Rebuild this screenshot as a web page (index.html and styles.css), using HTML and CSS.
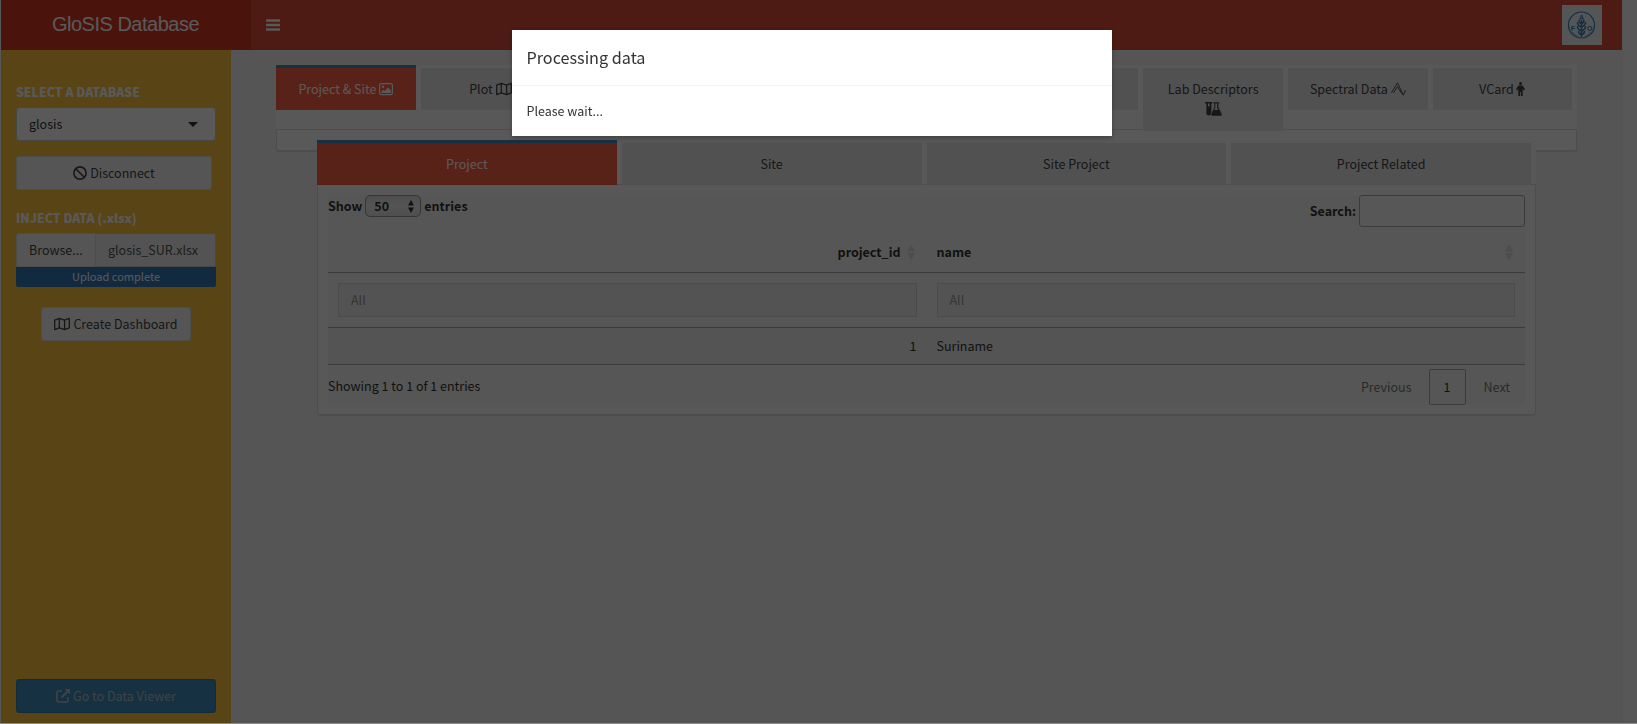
FILE: index.html
```html
<!DOCTYPE html>
<html lang="en">
<head>
<meta charset="utf-8">
<title>GloSIS Database</title>
<link rel="stylesheet" href="styles.css">
</head>
<body>
<div class="window">
  <div class="app">
    <header class="header">
      <div class="brand">GloSIS Database</div>
      <nav class="navbar">
        <svg class="bars" viewBox="0 0 14 12"><path d="M.5 1.500h13M.5 6h13M.5 10.500h13" stroke="currentColor" stroke-width="2.400" stroke-linecap="round"/></svg>
        <div class="fao">
          <svg viewBox="0 0 40 40">
            <g fill="none" stroke="#3f7fb8">
              <circle cx="19.5" cy="20" r="13" stroke-width="1.2"/>
              <path d="M19.5 15v17M19.5 19c-2-1-2.500-2-2.500-4M19.5 19c2-1 2.500-2 2.500-4M19.5 22c-3-1-4-3-4-5M19.5 22c3-1 4-3 4-5M19.5 26c-3-1-4-3-4-5M19.5 26c3-1 4-3 4-5M19.5 30c-2-1-3-3-3-4M19.5 30c2-1 3-3 3-4" stroke-width="1.500"/>
            </g>
            <g fill="#3f7fb8" class="fao-text">
              <text x="17" y="14.500">A</text><text x="8.800" y="25.500">F</text><text x="25" y="25.500">O</text>
            </g>
            <path d="M10.500 27.500q2.500 3.500 6 4.500M28.500 27.500q-2.500 3.500-6 4.500" fill="none" stroke="#86accf" stroke-width="2" stroke-dasharray="1.200 .8"/>
          </svg>
        </div>
      </nav>
    </header>
    <div class="main">
      <aside class="sidebar">
        <div class="label">SELECT A DATABASE</div>
        <div class="select"><span>glosis</span><i class="caret"></i></div>
        <button class="btn disconnect"><svg class="icon" viewBox="0 0 14 14"><g fill="none" stroke="currentColor" stroke-width="1.600"><circle cx="7" cy="7" r="6.100"/><path d="M2.700 2.700l8.600 8.600"/></g></svg>Disconnect</button>
        <div class="label inject">INJECT DATA (.xlsx)</div>
        <div class="file"><div class="browse">Browse...</div><div class="filename">glosis_SUR.xlsx</div></div>
        <div class="progress">Upload complete</div>
        <button class="btn create"><svg class="icon map" viewBox="0 0 16 14"><path d="M.7 3.200L5.300 1.300l5.300 1.900 4.700-1.900v9.500l-4.700 1.900-5.300-1.900L.7 12.700zM5.300 1.300v9.500M10.600 3.200v9.500" fill="none" stroke="currentColor" stroke-width="1.300" stroke-linejoin="round"/></svg>Create Dashboard</button>
        <button class="btn viewer"><svg class="icon" viewBox="0 0 14 14"><path d="M6 2H2.500Q.9 2 .9 3.600v7.800Q.9 13 2.500 13h7.800q1.600 0 1.600-1.600V8" fill="none" stroke="currentColor" stroke-width="1.600"/><path d="M5.500 8.500L12 2" stroke="currentColor" stroke-width="2"/><path d="M8.500 0H14v5.500z" fill="currentColor"/></svg>Go to Data Viewer</button>
      </aside>
      <section class="content">
        <div class="tabs">
          <div class="tab active">Project &amp; Site <svg class="icon" viewBox="0 0 14 14"><rect x=".6" y="1.600" width="12.800" height="11" rx="1.500" fill="none" stroke="currentColor" stroke-width="1.200"/><circle cx="4" cy="4.800" r="1.200" fill="currentColor"/><path d="M2.300 11V9.800l2-2 1.300 1.300L9 5.500l3 3.300V11z" fill="currentColor"/></svg></div>
          <div class="tab">Plot <svg class="icon map" viewBox="0 0 16 14"><path d="M.7 3.200L5.300 1.300l5.300 1.900 4.700-1.900v9.500l-4.700 1.900-5.300-1.900L.7 12.700zM5.300 1.300v9.500M10.600 3.200v9.500" fill="none" stroke="currentColor" stroke-width="1.300" stroke-linejoin="round"/></svg></div>
          <div class="tab"></div>
          <div class="tab"></div>
          <div class="tab"></div>
          <div class="tab"></div>
          <div class="tab tall">Lab Descriptors <svg class="icon flask" viewBox="0 0 17 14"><path d="M0 0h7v1.500h-.6V11a2.500 2.500 0 0 1-5 0V1.500H0z" fill="currentColor"/><path d="M3 1.600h1.500v3H3z" fill="#e8e8e8"/><path d="M7.500 0h7v1.600h-.8v4l3.200 6.200q.5 2.200-1.200 2.200H7.300q-1.700 0-1.200-2.200l2.900-6.200v-4H7.500z" fill="currentColor" stroke="#e8e8e8" stroke-width=".5"/><path d="M10.300 1.600h1.800v4.500l1.100 2H9.200l1.100-2z" fill="#e8e8e8"/></svg></div>
          <div class="tab">Spectral Data <svg class="icon wave" viewBox="0 0 15 14"><path d="M.5 10.800L6.500 .8l5.800 12.400L14.500 8M2.500 10.800l4-6.300 3.500 6 2 2.200" fill="none" stroke="currentColor" stroke-width=".9"/></svg></div>
          <div class="tab">VCard <svg class="icon person" viewBox="0 0 9 14"><circle cx="4.500" cy="1.500" r="1.500" fill="currentColor"/><path d="M3 3.500h3q.8 0 1.200.8L9 7.600l-1.300.9-1-1.500v7H4.900v-4h-.8v4H2.300V7l-1 1.500L0 7.600l1.800-3.300q.4-.8 1.200-.8z" fill="currentColor"/></svg></div>
        </div>
        <div class="pane">
          <div class="inner">
            <div class="tabs subtabs">
              <div class="tab active">Project</div><div class="tab">Site</div><div class="tab">Site Project</div><div class="tab">Project Related</div>
            </div>
            <div class="panel">
              <div class="grid">
                <div class="tools">
                  <div class="length">Show <span class="count">50<svg viewBox="0 0 6 13"><path d="M0 5.500L3 0l3 5.500zM0 7.500L3 13l3-5.500z" fill="currentColor"/></svg></span> entries</div>
                  <div class="search">Search:<input class="query" aria-label="Search"></div>
                </div>
                <div class="row head">
                  <div class="cell right">project_id<svg class="sort" viewBox="0 0 8 16"><path d="M0 7.500L4 0l4 7.500zM0 9L4 16.500 8 9z" fill="#dcdcdc"/></svg></div>
                  <div class="cell between">name<svg class="sort" viewBox="0 0 8 16"><path d="M0 7.500L4 0l4 7.500zM0 9L4 16.500 8 9z" fill="#dcdcdc"/></svg></div>
                </div>
                <div class="row filters">
                  <div class="cell"><div class="filter">All</div></div>
                  <div class="cell"><div class="filter">All</div></div>
                </div>
                <div class="row data"><div class="cell right">1</div><div class="cell">Suriname</div></div>
                <div class="foot">
                  <span class="info">Showing 1 to 1 of 1 entries</span>
                  <div class="pages"><span class="page">Previous</span><span class="page current">1</span><span class="page next">Next</span></div>
                </div>
              </div>
            </div>
          </div>
        </div>
      </section>
    </div>
  </div>
  <div class="track"></div>
</div>
<div class="backdrop">
  <div class="modal">
    <div class="modal-title">Processing data</div>
    <div class="modal-body">Please wait...</div>
  </div>
</div>
</body>
</html>
```
FILE: styles.css
```css
* { box-sizing: border-box; }
body {
  margin: 0;
  height: 724px;
  overflow: hidden;
  font: 12.5px/20px "Noto Sans CJK SC", sans-serif;
  color: #333;
  background: #8c8c8c;
}
.window { display: flex; height: 723px; padding-left: 1px; background: #f9f9f9; }
.app { width: 1621px; display: flex; flex-direction: column; }
.track { width: 14px; background: #f9f9f9; border-left: 1px solid #eee; }
.header { display: flex; height: 50px; color: #fff; }
.brand {
  width: 250px;
  background: #d33724;
  font: 20px/49px "Liberation Sans", sans-serif;
  letter-spacing: -.5px;
  padding-left: 51px;
}
.navbar {
  flex: 1;
  background: #dd4b39;
  display: flex;
  align-items: center;
  justify-content: space-between;
  padding: 0 20px 0 15px;
}
.bars { width: 14px; height: 12px; }
.fao { width: 40px; height: 40px; background: #eef4f6; }
.fao svg { display: block; width: 40px; height: 40px; }
.fao-text { font: bold 7px "Liberation Sans", sans-serif; }
.main { flex: 1; display: flex; }
.sidebar {
  width: 230px;
  background: #fec340;
  padding: 32px 15px 10px;
  display: flex;
  flex-direction: column;
}
.label { font-size: 12.3px; font-weight: 900; color: #fff; height: 25px; line-height: 20px; }
.select, .btn, .browse, .filename { height: 34px; border: 1px solid #ccc; background: #fff; }
.select {
  display: flex;
  align-items: center;
  justify-content: space-between;
  padding: 0 17px 0 12px;
  border-radius: 4px;
}
.caret { border: 5px solid transparent; border-top-color: #333; border-bottom: 0; }
.btn {
  display: flex;
  align-items: center;
  justify-content: center;
  gap: 3px;
  border-radius: 3px;
  border-color: #ddd;
  background: #f4f4f4;
  color: #444;
  font: inherit;
  padding: 0;
}
.icon { width: 14px; height: 14px; vertical-align: -2px; }
.map { width: 16px; }
.flask { width: 17px; }
.wave { width: 15px; }
.person { width: 9px; }
.disconnect { width: 196px; margin-top: 15px; }
.inject { margin-top: 18px; }
.file { display: flex; }
.browse { width: 80px; background: #f4f4f4; border-color: #ddd; border-radius: 3px 0 0 0; padding: 6px 12px; color: #444; }
.filename { flex: 1; border-left: 0; background: #eee; padding: 6px 12px; color: #555; }
.progress { height: 20px; line-height: 19px; background: #337ab7; color: #fff; text-align: center; font-size: 11px; border-radius: 0 0 2px 2px; }
.create { width: 150px; margin: 20px 0 0 25px; }
.viewer { margin-top: auto; background: #3c8dbc; border-color: #367fa9; color: #b8bfc4; }
.content { flex: 1; padding: 15px 45px 0 45px; background: #f2f2f2; }
.tabs { display: flex; align-items: flex-start; height: 64px; background: #fdfdfd; }
.tab {
  flex: 1;
  min-height: 45px;
  margin-right: 5px;
  border-top: 3px solid transparent;
  background: #e8e8e8 padding-box;
  padding: 11px 15px;
  text-align: center;
  color: #444;
}
.tall { padding-bottom: 12px; }
.tab.active { background: #ff6347; border-top-color: #3c8dbc; color: #fff; }
.pane {
  height: 21px;
  padding: 10px 40px;
  background: #fff;
  border: 1px solid #ddd;
  border-radius: 0 0 3px 3px;
  box-shadow: 0 1px 1px rgba(0,0,0,.1);
}
.inner { background: #fdfdfd; }
.subtabs { height: 44px; }
.subtabs .tab { position: relative; z-index: 1; }
.panel {
  height: 232px;
  padding: 10px;
  border: 1px solid #ddd;
  border-bottom-width: 2px;
  border-radius: 0 0 3px 3px;
  background: #fdfdfd;
}
.grid { background: #f7f7f7; height: 210px; }
.tools { display: flex; justify-content: space-between; height: 42px; font-weight: bold; }
.length { height: 22px; display: flex; align-items: center; gap: 3px; }
.count {
  width: 56px;
  height: 22px;
  border: 1px solid #999;
  border-radius: 5px;
  background: linear-gradient(#dedede, #f2f2f2 50%, #e2e2e2);
  display: flex;
  align-items: center;
  justify-content: space-between;
  padding: 0 6px 0 8px;
}
.count svg { width: 6px; height: 13px; }
.search { display: flex; height: 32px; align-items: center; gap: 3px; }
.query { width: 166px; height: 32px; border: 1px solid #aaa; border-radius: 3px; background: #fafafa; }
.row { display: grid; grid-template-columns: 1fr 1fr; }
.cell { padding: 0 10px; display: flex; align-items: center; }
.right { justify-content: flex-end; }
.head { height: 36px; font-weight: bold; border-bottom: 1px solid #aaa; padding-bottom: 6px; }
.head .right { padding-right: 12px; gap: 6px; }
.between { justify-content: space-between; padding-right: 12px; }
.sort { width: 8px; height: 16px; }
.filters { height: 55px; border-bottom: 1px solid #aaa; }
.filter { flex: 1; height: 34px; border: 1px solid #d2d6de; background: #eee; padding: 6px 12px; color: #999; }
.data { height: 37px; background: #efefef; border-bottom: 1px solid #aaa; }
.foot { display: flex; justify-content: space-between; height: 40px; padding-top: 4px; line-height: 36px; }
.info { line-height: 34px; }
.pages { display: flex; color: #777; }
.page { padding: 0 17px 0 0; }
.page.current { width: 37px; height: 36px; border: 1px solid #aaa; border-radius: 2px; padding: 0; text-align: center; color: #333; line-height: 34px; }
.page.next { padding: 0 15px 0 18px; }
.backdrop { position: fixed; z-index: 10; inset: 0 0 1px; background: rgba(0,0,0,.65); padding-top: 30px; }
.modal { width: 600px; height: 106px; margin-left: 512px; background: #fff; box-shadow: 0 2px 5px rgba(0,0,0,.3); color: #333; }
.modal-title { height: 56px; padding: 15px 14.5px; font-size: 16.2px; line-height: 25px; border-bottom: 1px solid #f4f4f4; }
.modal-body { padding: 15px 14.5px; }
```
